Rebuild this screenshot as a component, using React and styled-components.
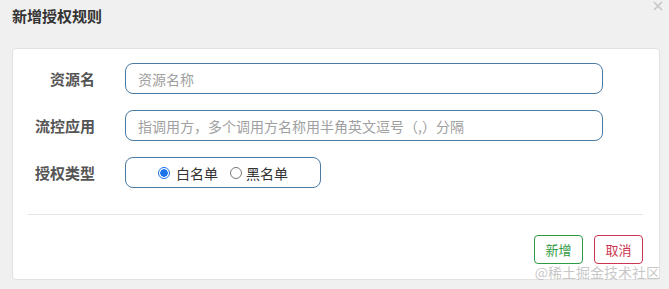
import React, { useState } from "react";
import styled, { createGlobalStyle } from "styled-components";

const GlobalStyle = createGlobalStyle`
  html, body {
    margin: 0;
    padding: 0;
    background: #f0f0f0;
  }
  body {
    font-family: "Noto Sans CJK SC", "Noto Sans", "Liberation Sans", sans-serif;
    color: #333;
  }
`;

const Dialog = styled.div`
  position: relative;
  width: 669px;
  height: 289px;
  box-sizing: border-box;
  padding: 0 9px 0 12px;
  overflow: hidden;
`;

const Header = styled.div`
  display: flex;
  justify-content: space-between;
  align-items: flex-start;
  height: 48px;
`;

const Title = styled.h3`
  margin: 6px 0 0;
  font-size: 15px;
  line-height: 20px;
  font-weight: 600;
  color: #333;
`;

const Close = styled.button`
  display: flex;
  margin: 1px -3px 0 0;
  padding: 0;
  border: 0;
  background: none;
  cursor: pointer;
`;

const Card = styled.div`
  width: 648px;
  height: 232px;
  box-sizing: border-box;
  background: #fff;
  border: 1px solid #e2e2e2;
  border-radius: 4px;
  padding: 14px 16px 0 13px;
`;

const Form = styled.div`
  display: flex;
  flex-direction: column;
  gap: 16px;
`;

const Row = styled.div`
  display: flex;
  align-items: center;
  gap: 30px;
`;

const Label = styled.label`
  width: 69px;
  text-align: right;
  font-size: 15px;
  font-weight: 700;
  color: #555;
`;

const Input = styled.input`
  width: ${(p) => p.$width}px;
  height: 31px;
  box-sizing: border-box;
  border: 1px solid #4a7ba6;
  border-radius: 8px;
  padding: 0 12px;
  font-family: inherit;
  font-size: 14px;
  color: #333;
  outline: none;

  &::placeholder {
    color: #a0a0a0;
  }
`;

const RadioBox = styled.div`
  width: 196px;
  height: 31px;
  box-sizing: border-box;
  border: 1px solid #4a7ba6;
  border-radius: 8px;
  display: flex;
  align-items: center;
  justify-content: center;
  gap: 12px;
`;

const RadioItem = styled.label`
  display: flex;
  align-items: center;
  gap: ${(p) => (p.$checked ? 6 : 4)}px;
  font-size: 14px;
  color: #333;
  cursor: pointer;
`;

const Dot = styled.span`
  width: 12px;
  height: 12px;
  box-sizing: border-box;
  border-radius: 50%;
  border: ${(p) => (p.$checked ? "1px solid #1a73e8" : "1px solid #767676")};
  background: ${(p) =>
    p.$checked ? "radial-gradient(circle, #1a73e8 3.5px, #fff 4px)" : "#fff"};
`;

const Divider = styled.hr`
  margin: 26px 0 0 2px;
  border: 0;
  border-top: 1px solid #e5e5e5;
`;

const Footer = styled.div`
  display: flex;
  justify-content: flex-end;
  gap: 11px;
  margin-top: 20px;
`;

const Button = styled.button`
  width: 49px;
  height: 29px;
  box-sizing: border-box;
  background: #fff;
  border: 1px solid ${(p) => p.$tone};
  color: ${(p) => p.$tone};
  border-radius: 4px;
  font-family: inherit;
  font-size: 13px;
  padding: 0;
  cursor: pointer;
`;

const Watermark = styled.span`
  position: absolute;
  right: 9px;
  bottom: 8px;
  font-size: 14px;
  line-height: 18px;
  color: rgba(150, 150, 150, 0.55);
  text-shadow: 0 0 1px #fff;
  pointer-events: none;
`;

export default function App() {
  const [type, setType] = useState("white");

  return (
    <>
      <GlobalStyle />
      <Dialog>
        <Header>
          <Title>新增授权规则</Title>
          <Close aria-label="close">
            <svg width="10" height="10" viewBox="0 0 10 10">
              <path
                d="M1 1 L9 9 M9 1 L1 9"
                stroke="#c6c6c6"
                strokeWidth="1.6"
                fill="none"
              />
            </svg>
          </Close>
        </Header>
        <Card>
          <Form>
            <Row>
              <Label>资源名</Label>
              <Input $width={478} placeholder="资源名称" />
            </Row>
            <Row>
              <Label>流控应用</Label>
              <Input
                $width={478}
                placeholder="指调用方，多个调用方名称用半角英文逗号（,）分隔"
              />
            </Row>
            <Row>
              <Label>授权类型</Label>
              <RadioBox>
                <RadioItem
                  $checked={type === "white"}
                  onClick={() => setType("white")}
                >
                  <Dot $checked={type === "white"} />
                  白名单
                </RadioItem>
                <RadioItem
                  $checked={type === "black"}
                  onClick={() => setType("black")}
                >
                  <Dot $checked={type === "black"} />
                  黑名单
                </RadioItem>
              </RadioBox>
            </Row>
          </Form>
          <Divider />
          <Footer>
            <Button $tone="#2f9a45">新增</Button>
            <Button $tone="#cc3552">取消</Button>
          </Footer>
        </Card>
        <Watermark>@稀土掘金技术社区</Watermark>
      </Dialog>
    </>
  );
}
